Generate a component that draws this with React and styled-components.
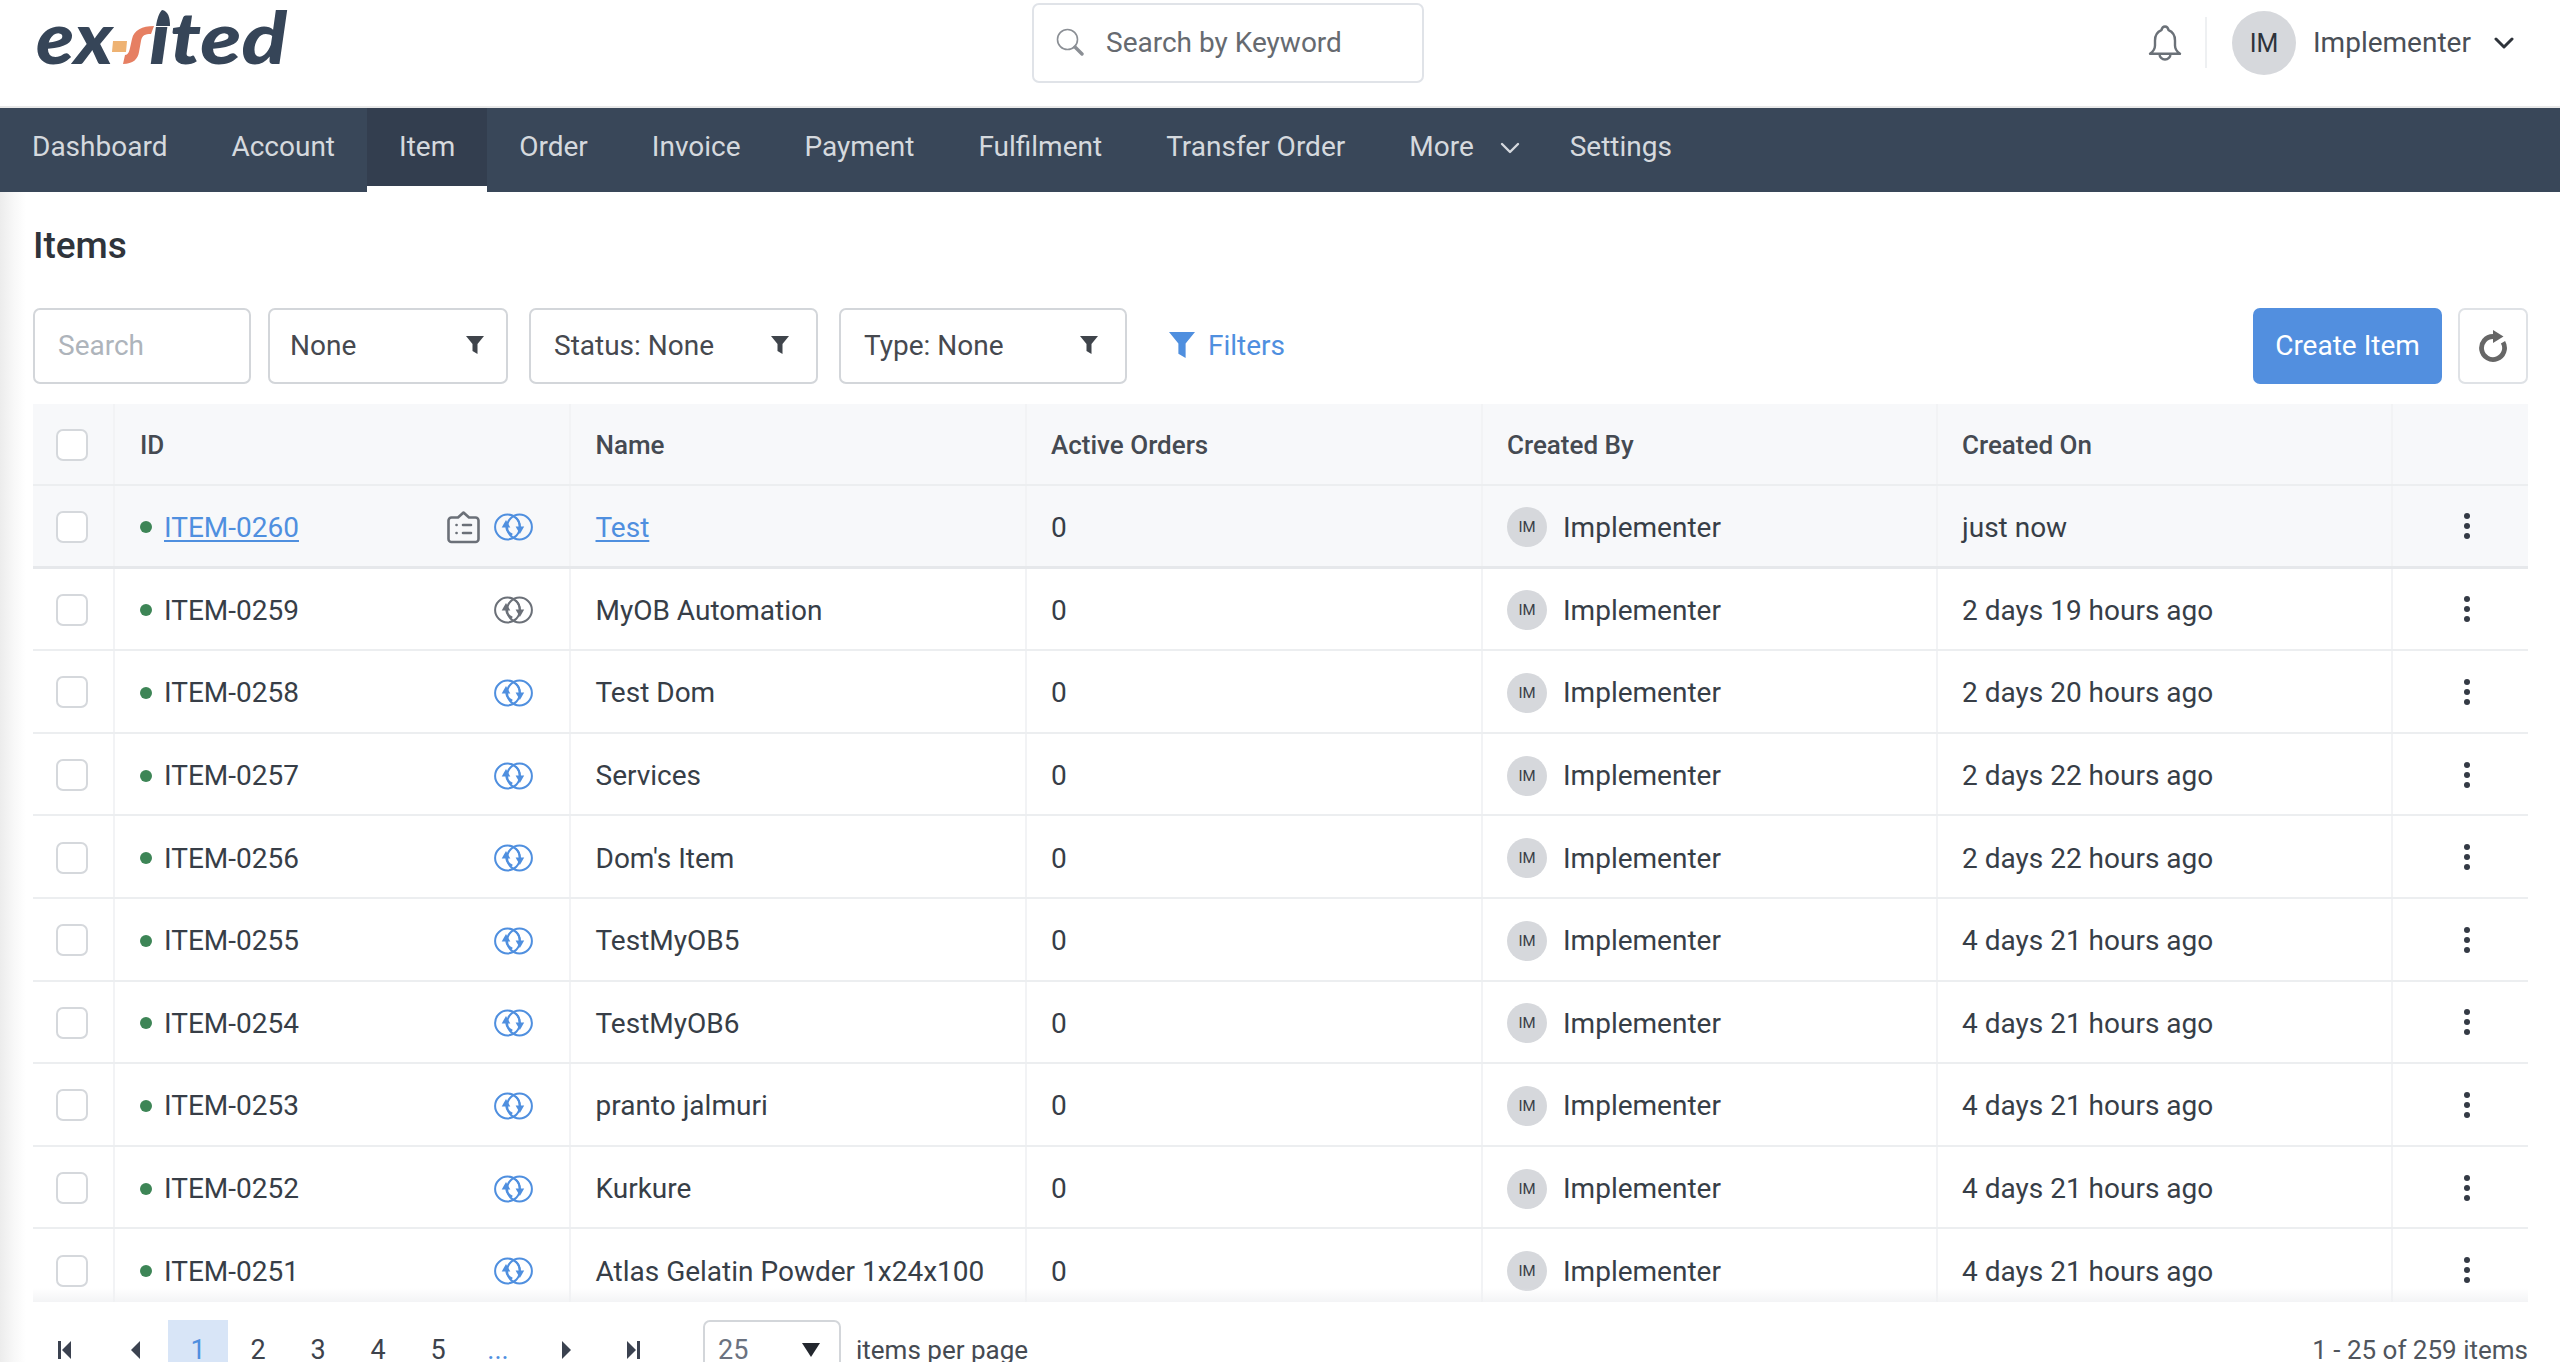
import React from 'react';
import styled, { createGlobalStyle } from 'styled-components';

const GlobalStyle = createGlobalStyle`
  html, body { margin: 0; padding: 0; background: #fff; }
  body { font-family: Roboto, "Liberation Sans", sans-serif; color: #373e47; }
  * { box-sizing: border-box; }
`;

const Page = styled.div`
  height: 100vh;
  overflow: hidden;
  display: flex;
  flex-direction: column;
`;

const Header = styled.header`
  height: 108px;
  flex-shrink: 0;
  display: grid;
  grid-template-columns: 1032px 392px 1fr;
  border-bottom: 2px solid #e8e8e8;
`;

const LogoWrap = styled.div`
  height: 106px;
`;

const SearchBox = styled.div`
  margin-top: 3px;
  height: 80px;
  border: 2px solid #e0e3e8;
  border-radius: 7px;
  display: flex;
  align-items: center;
  padding: 0 0 2px 22px;
  gap: 22px;
  font-size: 28px;
  color: #666a70;
`;

const UserArea = styled.div`
  display: flex;
  align-items: flex-start;
  padding-left: 724px;
`;

const BellWrap = styled.div`
  padding-top: 25px;
  height: 106px;
  width: 57px;
`;

const Divider = styled.div`
  width: 2px;
  height: 51px;
  margin-top: 17px;
  background: #eef0f2;
`;

const UserAvatar = styled.div`
  width: 64px;
  height: 64px;
  margin: 11px 17px 0 25px;
  border-radius: 50%;
  background: #d6d8dc;
  color: #2e333a;
  font-size: 25px;
  display: flex;
  align-items: center;
  justify-content: center;
`;

const UserName = styled.div`
  font-size: 28px;
  color: #4a4f57;
  line-height: 85px;
  margin-right: 23px;
`;

const UserChevron = styled.div`
  padding-top: 37px;
  line-height: 0;
`;

const Nav = styled.nav`
  height: 84px;
  flex-shrink: 0;
  background: #394759;
  display: flex;
`;

const NavItem = styled.div`
  padding: 0 32px;
  height: ${(p) => (p.$active ? '78px' : '84px')};
  line-height: 78px;
  font-size: 28px;
  color: #d5d9de;
  background: ${(p) => (p.$active ? '#333e4f' : 'transparent')};
  display: flex;
  align-items: flex-start;
  gap: 26px;
  box-shadow: ${(p) => (p.$active ? '0 6px 0 #fff' : 'none')};
`;

const NavChevron = styled.span`
  display: block;
  line-height: 0;
  padding-top: 34px;
  margin-right: -14px;
`;

const Main = styled.main`
  flex: 1;
  min-height: 0;
  padding: 28px 32px 0 33px;
  background: linear-gradient(to right, #ececec, #f8f8f8 14px, #fff 26px);
`;

const Title = styled.h1`
  margin: 0 0 38px;
  font-size: 37px;
  font-weight: 500;
  line-height: 51px;
  color: #2f343b;
`;

const Toolbar = styled.div`
  height: 76px;
  margin-top: -1px;
  display: flex;
  align-items: stretch;
  margin-bottom: 20px;
`;

const SearchInput = styled.div`
  width: 218px;
  border: 2px solid #d3d6da;
  border-radius: 7px;
  font-size: 28px;
  color: #aeb4bb;
  display: flex;
  align-items: center;
  padding: 0 0 2px 23px;
  margin-right: 17px;
`;

const Select = styled.div`
  width: ${(p) => p.$width}px;
  border: 2px solid #d3d6da;
  border-radius: 7px;
  font-size: 28px;
  color: #46494f;
  display: flex;
  align-items: center;
  justify-content: space-between;
  padding: 0 ${(p) => p.$right}px 2px ${(p) => p.$left}px;
  margin-right: ${(p) => p.$gap}px;
`;

const FilterLink = styled.div`
  display: flex;
  align-items: center;
  gap: 13px;
  margin-left: 42px;
  padding-bottom: 2px;
  color: #4f8fdf;
  font-size: 28px;
`;

const Spacer = styled.div`
  flex: 1;
`;

const CreateButton = styled.div`
  width: 189px;
  background: #528fdf;
  color: #fff;
  border-radius: 7px;
  font-size: 28px;
  display: flex;
  align-items: center;
  justify-content: center;
  padding-bottom: 2px;
  margin-right: 16px;
`;

const RefreshButton = styled.div`
  width: 70px;
  border: 2px solid #dfe2e6;
  border-radius: 7px;
  display: flex;
  align-items: center;
  justify-content: center;
`;

const TableWrap = styled.div`
  position: relative;
  height: 898px;
  overflow: hidden;

  &::after {
    content: '';
    position: absolute;
    left: 0;
    right: 0;
    bottom: 0;
    height: 14px;
    background: linear-gradient(to bottom, rgba(240, 241, 243, 0), rgba(240, 241, 243, 0.8));
  }
`;

const Row = styled.div`
  display: grid;
  grid-template-columns: 82px 455.5px 456.5px 456px 455px 455px 135px;
  height: ${(p) => (p.$head ? '82px' : '82.6px')};
  background: ${(p) => (p.$tint ? '#f7f8fa' : '#fff')};
  border-bottom: ${(p) => (p.$strong ? '3px solid #e6e8eb' : '2px solid #eceef0')};
`;

const Cell = styled.div`
  display: flex;
  align-items: center;
  padding-left: ${(p) => p.$pad || 24}px;
  padding-top: 3px;
  font-size: 28px;
  color: #373e47;
  border-right: 2px solid #f2f3f5;
  min-width: 0;

  &:last-child {
    border-right: 0;
  }
`;

const HeadCell = styled(Cell)`
  padding-top: 1px;
  font-size: 26px;
  font-weight: 500;
  color: #454a52;
`;

const CheckCell = styled(Cell)`
  padding-left: 23px;
  padding-top: 2px;
`;

const Checkbox = styled.div`
  width: 32px;
  height: 32px;
  border: 2px solid #d5d8dc;
  border-radius: 7px;
  background: #fff;
`;

const Dot = styled.span`
  width: 12px;
  height: 12px;
  border-radius: 50%;
  background: #3d8556;
  margin-right: 12px;
  flex-shrink: 0;
`;

const ItemLink = styled.a`
  color: #4f8fdf;
  text-decoration: underline;
  text-underline-offset: 3px;
  text-decoration-thickness: 2px;
`;

const RowIcons = styled.div`
  margin-left: auto;
  margin-right: 36px;
  display: flex;
  align-items: center;
  gap: 14px;
`;

const SmallAvatar = styled.span`
  width: 40px;
  height: 40px;
  border-radius: 50%;
  background: #d6d8dc;
  color: #3a3f46;
  font-size: 15px;
  display: flex;
  align-items: center;
  justify-content: center;
  margin-right: 16px;
  flex-shrink: 0;
`;

const ActionCell = styled(Cell)`
  padding-left: 71px;
`;

const Kebab = styled.div`
  display: flex;
  flex-direction: column;
  gap: 4px;
  margin-top: -2px;

  span {
    width: 6px;
    height: 6px;
    border-radius: 50%;
    background: #343a45;
  }
`;

const Footer = styled.footer`
  display: flex;
  align-items: flex-start;
  padding: 18px 0 0 2px;
  font-size: 26px;
`;

const Arrows = styled.div`
  display: flex;
  gap: ${(p) => p.$gap}px;
`;

const PagerButton = styled.div`
  width: 60px;
  height: 60px;
  display: flex;
  align-items: center;
  justify-content: center;
  font-size: 27px;
  color: ${(p) => (p.$active || p.$more ? '#4f8fdf' : '#3d434c')};
  background: ${(p) => (p.$active ? '#d8e5f7' : 'transparent')};
`;

const Pages = styled.div`
  display: flex;
  margin: 0 10px 0 4px;
`;

const PerPage = styled.div`
  width: 138px;
  height: 70px;
  margin-left: 40px;
  border: 2px solid #d3d6da;
  border-radius: 7px 7px 0 0;
  display: flex;
  justify-content: space-between;
  padding: 12px 19px 0 13px;
  font-size: 27px;
  color: #6b7280;
`;

const PerPageArrow = styled.span`
  line-height: 0;
  padding-top: 9px;
`;

const PerPageLabel = styled.div`
  margin-left: 15px;
  line-height: 60px;
  color: #454a52;
`;

const Summary = styled.div`
  margin-left: auto;
  line-height: 60px;
  color: #4f555d;
`;

const Logo = () => (
  <svg width="320" height="90" viewBox="0 0 320 90">
    <g fontFamily="Lato, 'Open Sans', sans-serif" fontWeight="900" fontStyle="italic" fill="#364558" fontSize="72">
      <text x="36" y="64" textLength="77" lengthAdjust="spacingAndGlyphs">ex</text>
      <text x="149" y="64" textLength="138" lengthAdjust="spacingAndGlyphs">ıted</text>
    </g>
    <path d="M162 10c6 1 8 7 8 16h-14c1-7 3-13 6-16z" fill="#364558" />
    <path d="M113 41h14l-1 11h-14z" fill="#eeb272" />
    <path d="M154 26l-3 8c-6 0-9 1-10 7l-2 11c-1 7-6 12-16 12l2-9c3 0 4-3 5-7l2-9c2-9 10-13 22-13z" fill="#e67f62" />
  </svg>
);

const SearchGlyph = () => (
  <svg width="28" height="28" viewBox="0 0 28 28" fill="none">
    <circle cx="11.5" cy="11.5" r="10" stroke="#8b8f95" strokeWidth="1.6" />
    <path d="M19 19l7 7" stroke="#8b8f95" strokeWidth="3.4" strokeLinecap="round" />
  </svg>
);

const Bell = () => (
  <svg width="34" height="36" viewBox="0 0 34 36" fill="none" stroke="#6b7178" strokeWidth="2.4" strokeLinejoin="round">
    <path d="M17 1.5c2 0 3.2 1.6 3.6 3.7C25.3 7.2 27 10.800 27 15.500v5c0 3.500 1.500 5.800 5 8.300H2c3.500-2.500 5-4.800 5-8.300v-5c0-4.700 1.700-8.300 6.400-10.300C13.800 3.100 15 1.500 17 1.500z" />
    <path d="M11.500 29a5.500 5.500 0 0 0 11 0" />
  </svg>
);

const Chevron = ({ color = '#2e333a', size = 20, weight = 3 }) => (
  <svg width={size} height={size * 0.6} viewBox="0 0 20 12" fill="none">
    <path d="M2 2l8 8 8-8" stroke={color} strokeWidth={weight} strokeLinecap="round" strokeLinejoin="round" />
  </svg>
);

const Funnel = ({ color = '#3f444b', size = 18 }) => (
  <svg width={size} height={size} viewBox="0 0 18 18">
    <path d="M0 0h18l-6.500 8v10l-5-3V8z" fill={color} />
  </svg>
);

const Refresh = () => (
  <svg width="30" height="34" viewBox="0 0 30 34" fill="none">
    <path d="M15 7.500A11.500 11.500 0 1 0 25 13.250" stroke="#666" strokeWidth="4.800" />
    <path d="M15 1l10.500 6.500L15 14z" fill="#666" />
  </svg>
);

const Clipboard = () => (
  <svg width="33" height="33" viewBox="0 0 33 33" fill="none" stroke="#6b7078" strokeWidth="2.600" strokeLinejoin="round">
    <path d="M4.500 6.500h6.500l5.500-5 5.500 5h6.500a3 3 0 0 1 3 3v18.500a3 3 0 0 1-3 3h-24a3 3 0 0 1-3-3v-18.500a3 3 0 0 1 3-3z" />
    <path d="M9.500 14h.1M9.500 22h.1M16 14h8M16 22h8" strokeLinecap="round" />
  </svg>
);

const SyncIcon = ({ color }) => (
  <svg width="39" height="28" viewBox="0 0 39 28" fill="none" stroke={color} strokeWidth="2">
    <circle cx="13.500" cy="14" r="12.400" />
    <circle cx="25.500" cy="14" r="12.400" />
    <path d="M18.300 21.700c-3.500-1.500-6-4-6-8.500" strokeWidth="2" />
    <path d="M12 7l-4.300 7.500h8.600z" fill={color} stroke="none" />
    <path d="M21.700 4.500c2.500 2 4 4.500 4 9.500" strokeWidth="2" />
    <path d="M25.900 21l4.300-7.500h-8.600z" fill={color} stroke="none" />
  </svg>
);

const PagerArrow = ({ dir, bar }) => (
  <svg width="16" height="20" viewBox="0 0 16 20" fill="#3b4250" transform={dir === 'right' ? 'scale(-1 1)' : undefined}>
    {bar && <rect x="1" y="1" width="3" height="18" />}
    <path d="M14 1v18L5 10z" />
  </svg>
);

const items = [
  { id: 'ITEM-0260', name: 'Test', time: 'just now', open: true },
  { id: 'ITEM-0259', name: 'MyOB Automation', time: '2 days 19 hours ago', idle: true },
  { id: 'ITEM-0258', name: 'Test Dom', time: '2 days 20 hours ago' },
  { id: 'ITEM-0257', name: 'Services', time: '2 days 22 hours ago' },
  { id: 'ITEM-0256', name: "Dom's Item", time: '2 days 22 hours ago' },
  { id: 'ITEM-0255', name: 'TestMyOB5', time: '4 days 21 hours ago' },
  { id: 'ITEM-0254', name: 'TestMyOB6', time: '4 days 21 hours ago' },
  { id: 'ITEM-0253', name: 'pranto jalmuri', time: '4 days 21 hours ago' },
  { id: 'ITEM-0252', name: 'Kurkure', time: '4 days 21 hours ago' },
  { id: 'ITEM-0251', name: 'Atlas Gelatin Powder 1x24x100', time: '4 days 21 hours ago' },
];

const navItems = ['Dashboard', 'Account', 'Item', 'Order', 'Invoice', 'Payment', 'Fulfilment', 'Transfer Order'];

const ItemRow = ({ item }) => (
  <Row $tint={item.open} $strong={item.open}>
    <CheckCell>
      <Checkbox />
    </CheckCell>
    <Cell $pad={25}>
      <Dot />
      {item.open ? <ItemLink>{item.id}</ItemLink> : item.id}
      <RowIcons>
        {item.open && <Clipboard />}
        <SyncIcon color={item.idle ? '#6b7078' : '#4f8fdf'} />
      </RowIcons>
    </Cell>
    <Cell $pad={25}>{item.open ? <ItemLink>{item.name}</ItemLink> : item.name}</Cell>
    <Cell>0</Cell>
    <Cell>
      <SmallAvatar>IM</SmallAvatar>
      Implementer
    </Cell>
    <Cell>{item.time}</Cell>
    <ActionCell>
      <Kebab>
        <span />
        <span />
        <span />
      </Kebab>
    </ActionCell>
  </Row>
);

export default function App() {
  return (
    <Page>
      <GlobalStyle />
      <Header>
        <LogoWrap>
          <Logo />
        </LogoWrap>
        <SearchBox>
          <SearchGlyph />
          Search by Keyword
        </SearchBox>
        <UserArea>
          <BellWrap>
            <Bell />
          </BellWrap>
          <Divider />
          <UserAvatar>IM</UserAvatar>
          <UserName>Implementer</UserName>
          <UserChevron>
            <Chevron />
          </UserChevron>
        </UserArea>
      </Header>
      <Nav>
        {navItems.map((label) => (
          <NavItem key={label} $active={label === 'Item'}>
            {label}
          </NavItem>
        ))}
        <NavItem>
          More
          <NavChevron>
            <Chevron color="#d5d9de" size={20} weight={2.400} />
          </NavChevron>
        </NavItem>
        <NavItem>Settings</NavItem>
      </Nav>
      <Main>
        <Title>Items</Title>
        <Toolbar>
          <SearchInput>Search</SearchInput>
          <Select $width={240} $gap={21} $left={20} $right={22}>
            None
            <Funnel />
          </Select>
          <Select $width={289} $gap={21} $left={23} $right={27}>
            Status: None
            <Funnel />
          </Select>
          <Select $width={288} $gap={0} $left={23} $right={27}>
            Type: None
            <Funnel />
          </Select>
          <FilterLink>
            <Funnel color="#4f8fdf" size={26} />
            Filters
          </FilterLink>
          <Spacer />
          <CreateButton>Create Item</CreateButton>
          <RefreshButton>
            <Refresh />
          </RefreshButton>
        </Toolbar>
        <TableWrap>
          <Row $head $tint>
            <CheckCell>
              <Checkbox />
            </CheckCell>
            <HeadCell $pad={25}>ID</HeadCell>
            <HeadCell $pad={25}>Name</HeadCell>
            <HeadCell>Active Orders</HeadCell>
            <HeadCell>Created By</HeadCell>
            <HeadCell>Created On</HeadCell>
            <HeadCell />
          </Row>
          {items.map((item) => (
            <ItemRow key={item.id} item={item} />
          ))}
        </TableWrap>
        <Footer>
          <Arrows $gap={9}>
            <PagerButton>
              <PagerArrow bar />
            </PagerButton>
            <PagerButton>
              <PagerArrow />
            </PagerButton>
          </Arrows>
          <Pages>
            <PagerButton $active>1</PagerButton>
            <PagerButton>2</PagerButton>
            <PagerButton>3</PagerButton>
            <PagerButton>4</PagerButton>
            <PagerButton>5</PagerButton>
            <PagerButton $more>...</PagerButton>
          </Pages>
          <Arrows $gap={5}>
            <PagerButton>
              <PagerArrow dir="right" />
            </PagerButton>
            <PagerButton>
              <PagerArrow dir="right" bar />
            </PagerButton>
          </Arrows>
          <PerPage>
            25
            <PerPageArrow>
              <svg width="18" height="14" viewBox="0 0 18 14">
                <path d="M0 0h18L9 14z" fill="#23272e" />
              </svg>
            </PerPageArrow>
          </PerPage>
          <PerPageLabel>items per page</PerPageLabel>
          <Summary>1 - 25 of 259 items</Summary>
        </Footer>
      </Main>
    </Page>
  );
}
